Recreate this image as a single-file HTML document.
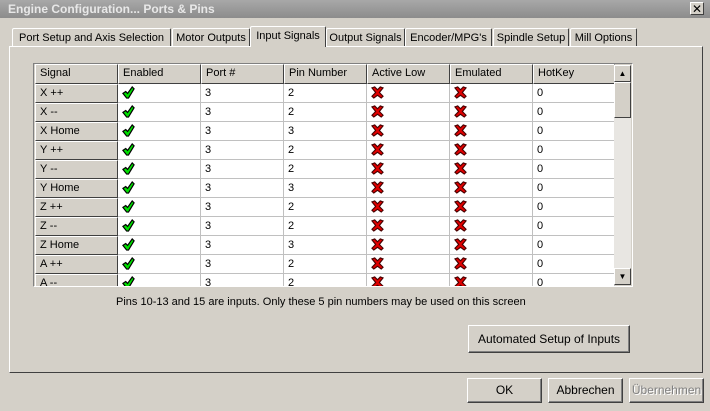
<!DOCTYPE html>
<html><head><style>
body{margin:0;width:710px;height:411px;background:#d4d0c8;font-family:"Liberation Sans",sans-serif;font-size:11px;position:relative;overflow:hidden;color:#000}
.a{position:absolute}
.title{left:0;top:0;width:710px;height:18px;background:linear-gradient(#a8a8a8,#8c8c8c);color:#e8e8e8;font-weight:bold;font-size:12px;line-height:18px;padding-left:8px;box-sizing:border-box}
.close{left:690px;top:2px;width:14px;height:13px;background:#d4d0c8;border:1px solid;border-color:#fff #404040 #404040 #fff;font-size:12px;line-height:12px;text-align:center;box-sizing:border-box}
.tab{top:28px;height:18px;line-height:18px;border:1px solid;border-color:#fff #404040 transparent #fff;border-bottom:none;text-align:center;box-sizing:border-box;border-radius:2px 2px 0 0}
.tab.sel{top:26px;height:21px;background:#d4d0c8;z-index:2}
.panel{left:9px;top:46px;width:694px;height:327px;border:1px solid;border-color:#fff #404040 #404040 #fff;box-sizing:border-box}
.grid{left:33px;top:63px;width:600px;height:224px;border:1px solid;border-color:#808080 #fff #fff #808080;background:#d4d0c8;overflow:hidden;box-sizing:border-box}
.c{position:absolute;height:19px;line-height:18px;box-sizing:border-box;padding-left:4px;background:#fff;border-right:1px solid #c0c0c0;border-bottom:1px solid #c0c0c0;white-space:nowrap;overflow:hidden}
.c.h{background:#d4d0c8;border-top:1px solid #fff;border-left:1px solid #fff;border-right:1px solid #404040;border-bottom:1px solid #404040;line-height:17px}
.c svg{position:absolute;left:4px;top:2px}
.sb{left:580px;top:1px;width:17px;height:220px;background:#e8e6e2;z-index:3}
.sbb{position:absolute;left:0;width:17px;height:17px;background:#d4d0c8;border:1px solid;border-color:#fff #404040 #404040 #fff;box-sizing:border-box;font-size:8px;text-align:center;line-height:15px}
.btn{height:25px;background:#d4d0c8;border:1px solid;border-color:#fff #404040 #404040 #fff;box-shadow:inset -1px -1px #808080;box-sizing:border-box;text-align:center;line-height:23px;font-size:12px}
</style></head><body>
<div class="a title">Engine Configuration... Ports &amp; Pins</div>
<div class="a close">✕</div>
<div class="a panel"></div>
<div class="a tab" style="left:12px;width:159px">Port Setup and Axis Selection</div>
<div class="a tab" style="left:172px;width:78px">Motor Outputs</div>
<div class="a tab sel" style="left:250px;width:76px">Input Signals</div>
<div class="a tab" style="left:326px;width:79px">Output Signals</div>
<div class="a tab" style="left:405px;width:87px">Encoder/MPG's</div>
<div class="a tab" style="left:493px;width:76px">Spindle Setup</div>
<div class="a tab" style="left:570px;width:67px">Mill Options</div>
<div class="a grid" id="g">
<div class="a sb"><div class="sbb" style="top:0">▲</div><div class="sbb" style="top:17px;height:36px"></div><div class="sbb" style="top:203px">▼</div></div>
</div>
<div class="a" style="left:116px;top:296px;font-size:11px">Pins 10-13 and 15 are inputs. Only these 5 pin numbers may be used on this screen</div>
<div class="a btn" style="left:468px;top:325px;width:162px;height:28px;line-height:26px">Automated Setup of Inputs</div>
<div class="a btn" style="left:467px;top:378px;width:75px">OK</div>
<div class="a btn" style="left:548px;top:378px;width:75px">Abbrechen</div>
<div class="a btn" style="left:629px;top:378px;width:75px;color:#808080;text-shadow:1px 1px #fff">Übernehmen</div>
<script>
var ck='<svg width="13" height="13" viewBox="0 0 14 14"><path d="M1 8 L4 6 L6 8 L11 1 L13 3 L7 13 L5 13 Z" fill="#00e000" stroke="#000" stroke-width="1.3"/></svg>';
var x='<svg width="13" height="13" viewBox="0 0 14 14"><path d="M1 2 L4 1 L7 4 L10 1 L13 2 L9 7 L13 11 L11 13 L7 10 L3 13 L1 11 L5 7 Z" fill="#e00000" stroke="#400" stroke-width="1.2"/></svg>';
var xs=[1,84,167,250,333,416,499,581];
var hd=["Signal","Enabled","Port #","Pin Number","Active Low","Emulated","HotKey"];
var rows=[["X ++",2],["X --",2],["X Home",3],["Y ++",2],["Y --",2],["Y Home",3],["Z ++",2],["Z --",2],["Z Home",3],["A ++",2],["A --",2]];
var h='';
function cell(i,y,cls,txt,hh){h+='<div class="c'+cls+'" style="left:'+xs[i]+'px;top:'+y+'px;width:'+(xs[i+1]-xs[i])+'px'+(hh?';height:'+hh+'px':'')+'">'+txt+'</div>';}
hd.forEach(function(t,i){cell(i,0,' h',t,20);});
rows.forEach(function(r,k){var y=20+k*19;var v=[r[0],ck,'3',''+r[1],x,x,'0'];v.forEach(function(t,i){cell(i,y,i==0?' h':'',t);});});
document.getElementById('g').insertAdjacentHTML('afterbegin',h);
</script>
</body></html>
